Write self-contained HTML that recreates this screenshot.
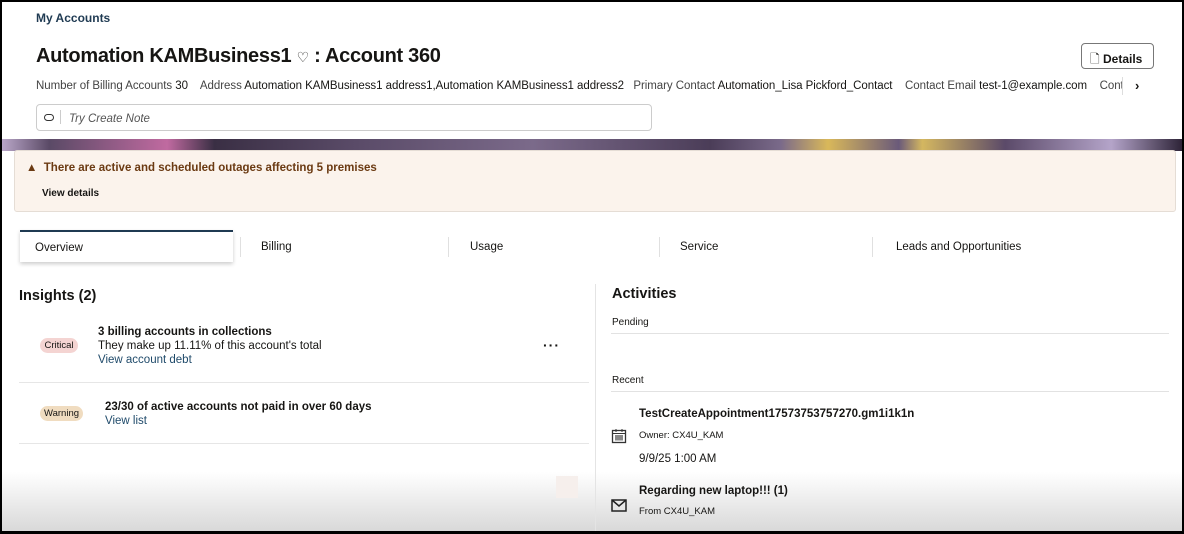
<!DOCTYPE html>
<html><head><style>
*{box-sizing:border-box;margin:0;padding:0}
body{width:1184px;height:534px;background:#000;font-family:"Liberation Sans",sans-serif;color:#161513;overflow:hidden;position:relative}
.page{position:absolute;left:2px;top:2px;width:1180px;height:529px;background:#fff;overflow:hidden}
.a{position:absolute;white-space:nowrap}
</style></head><body><div class="page">
<div class="a" style="left:34px;top:9px;font-size:12px;color:#1f3a52;font-weight:bold">My Accounts</div>
<div class="a" style="left:34px;top:43px;font-size:20px;font-weight:bold;letter-spacing:-0.3px">Automation KAMBusiness1 <span style="font-size:14px;font-weight:normal">♡</span> : Account 360</div>
<div class="a" style="left:1079px;top:41px;width:73px;height:26px;border:1px solid #777;border-radius:4px;font-size:12px;font-weight:bold;padding:6px 0 0 8px"><span style="font-weight:normal">🗋</span> Details</div>
<div class="a" style="left:34px;top:78px;font-size:11.5px;color:#444;letter-spacing:-0.05px">Number of Billing Accounts <span style="color:#161513">30</span> &nbsp;&nbsp; Address <span style="color:#161513">Automation KAMBusiness1 address1,Automation KAMBusiness1 address2</span> &nbsp;&nbsp;Primary Contact <span style="color:#161513">Automation_Lisa Pickford_Contact</span> &nbsp;&nbsp; Contact Email <span style="color:#161513">test-1@example.com</span> &nbsp;&nbsp; Conta</div>
<div class="a" style="left:1120px;top:74px;width:10px;height:20px;background:#fff"></div>
<div class="a" style="left:1120px;top:75px;width:1px;height:18px;background:#ddd"></div>
<div class="a" style="left:1133px;top:76px;font-size:13px;font-weight:bold">›</div>
<div class="a" style="left:34px;top:102px;width:616px;height:27px;border:1px solid #ccc;border-radius:4px;font-size:11.5px;font-style:italic;color:#555;padding:8px 0 0 32px">Try Create Note</div>
<div class="a" style="left:42px;top:112px;width:10px;height:7px;border:1.5px solid #333;border-radius:4px"></div>
<div class="a" style="left:58px;top:108px;width:1px;height:14px;background:#ccc"></div>
<div class="a" style="left:0;top:137px;width:1180px;height:12px;background:linear-gradient(90deg,#b9a6c8 0,#5a4a66 4%,#c06aa0 14%,#3a2f44 18%,#5a4b68 30%,#7b6a8a 45%,#4b3d58 60%,#7a6a8a 66%,#d9b85a 70%,#6a5a7a 76%,#d4b760 78%,#5b4a69 85%,#b4a4c9 94%,#2e2438 100%)"></div>
<div class="a" style="left:12px;top:148px;width:1162px;height:62px;background:#fbf3ec;border:1px solid #e5ddd5;border-radius:3px"></div>
<div class="a" style="left:24px;top:160px;font-size:11.5px;font-weight:bold;color:#6b3a12">▲ &nbsp;There are active and scheduled outages affecting 5 premises</div>
<div class="a" style="left:40px;top:186px;font-size:10px;font-weight:bold">View details</div>
<div class="a" style="left:18px;top:228px;width:213px;height:32px;border-top:2px solid #1f3a52;box-shadow:0 2px 4px rgba(0,0,0,.2);background:#fff;font-size:11.5px;padding:10px 0 0 15px">Overview</div>
<div class="a" style="left:238px;top:235px;width:1px;height:20px;background:#e0e0e0"></div>
<div class="a" style="left:446px;top:235px;width:1px;height:20px;background:#e0e0e0"></div>
<div class="a" style="left:657px;top:235px;width:1px;height:20px;background:#e0e0e0"></div>
<div class="a" style="left:870px;top:235px;width:1px;height:20px;background:#e0e0e0"></div>
<div class="a" style="left:259px;top:239px;font-size:11.5px">Billing</div>
<div class="a" style="left:468px;top:239px;font-size:11.5px">Usage</div>
<div class="a" style="left:678px;top:239px;font-size:11.5px">Service</div>
<div class="a" style="left:894px;top:239px;font-size:11.5px">Leads and Opportunities</div>
<div class="a" style="left:17px;top:286px;font-size:14.5px;font-weight:bold">Insights (2)</div>
<div class="a" style="left:38px;top:336px;width:38px;height:15px;background:#f4d4d2;border-radius:8px;font-size:9.5px;text-align:center;padding-top:2px">Critical</div>
<div class="a" style="left:96px;top:324px;font-size:11.5px;font-weight:bold">3 billing accounts in collections</div>
<div class="a" style="left:96px;top:338px;font-size:11.5px">They make up 11.11% of this account's total</div>
<div class="a" style="left:96px;top:352px;font-size:11.5px;color:#1f4a6a">View account debt</div>
<div class="a" style="left:541px;top:335px;font-size:14px;font-weight:bold;letter-spacing:1px">···</div>
<div class="a" style="left:17px;top:380px;width:570px;height:1px;background:#e6e6e6"></div>
<div class="a" style="left:38px;top:404px;width:43px;height:15px;background:#f0dcc0;border-radius:8px;font-size:9.5px;text-align:center;padding-top:2px">Warning</div>
<div class="a" style="left:103px;top:399px;font-size:11.5px;font-weight:bold">23/30 of active accounts not paid in over 60 days</div>
<div class="a" style="left:103px;top:413px;font-size:11.5px;color:#1f4a6a">View list</div>
<div class="a" style="left:17px;top:441px;width:570px;height:1px;background:#e6e6e6"></div>
<div class="a" style="left:593px;top:282px;width:1px;height:250px;background:#e4e4e4"></div>
<div class="a" style="left:610px;top:284px;font-size:14.5px;font-weight:bold">Activities</div>
<div class="a" style="left:610px;top:315px;font-size:10px">Pending</div>
<div class="a" style="left:609px;top:331px;width:558px;height:1px;background:#e2e2e2"></div>
<div class="a" style="left:610px;top:373px;font-size:10px">Recent</div>
<div class="a" style="left:609px;top:389px;width:558px;height:1px;background:#e2e2e2"></div>
<div class="a" style="left:637px;top:406px;font-size:11.5px;font-weight:bold">TestCreateAppointment17573753757270.gm1i1k1n</div>
<div class="a" style="left:637px;top:428px;font-size:9.5px">Owner: CX4U_KAM</div>
<div class="a" style="left:637px;top:451px;font-size:11.5px">9/9/25 1:00 AM</div>
<svg class="a" style="left:609px;top:426px" width="16" height="16" viewBox="0 0 16 16"><rect x="1.5" y="2.5" width="13" height="12" fill="none" stroke="#333" stroke-width="1.3"/><line x1="1.5" y1="5.5" x2="14.5" y2="5.5" stroke="#333"/><line x1="5" y1="1" x2="5" y2="4" stroke="#333"/><line x1="11" y1="1" x2="11" y2="4" stroke="#333"/><rect x="4" y="7" width="8" height="5.5" fill="#888"/></svg>
<div class="a" style="left:0;top:470px;width:1180px;height:60px;background:linear-gradient(#fff,#d8d8d8)"></div>
<div class="a" style="left:593px;top:470px;width:1px;height:60px;background:#e4e4e4"></div>
<div class="a" style="left:554px;top:474px;width:22px;height:22px;background:#f6efec"></div>
<div class="a" style="left:637px;top:483px;font-size:11.5px;font-weight:bold">Regarding new laptop!!! (1)</div>
<div class="a" style="left:637px;top:504px;font-size:9.5px">From CX4U_KAM</div>
<svg class="a" style="left:609px;top:497px" width="16" height="14" viewBox="0 0 16 14"><rect x="1" y="1" width="14" height="11" fill="none" stroke="#222" stroke-width="1.5"/><path d="M1 1 L8 7 L15 1" fill="none" stroke="#222" stroke-width="1.5"/></svg>
</div></body></html>
